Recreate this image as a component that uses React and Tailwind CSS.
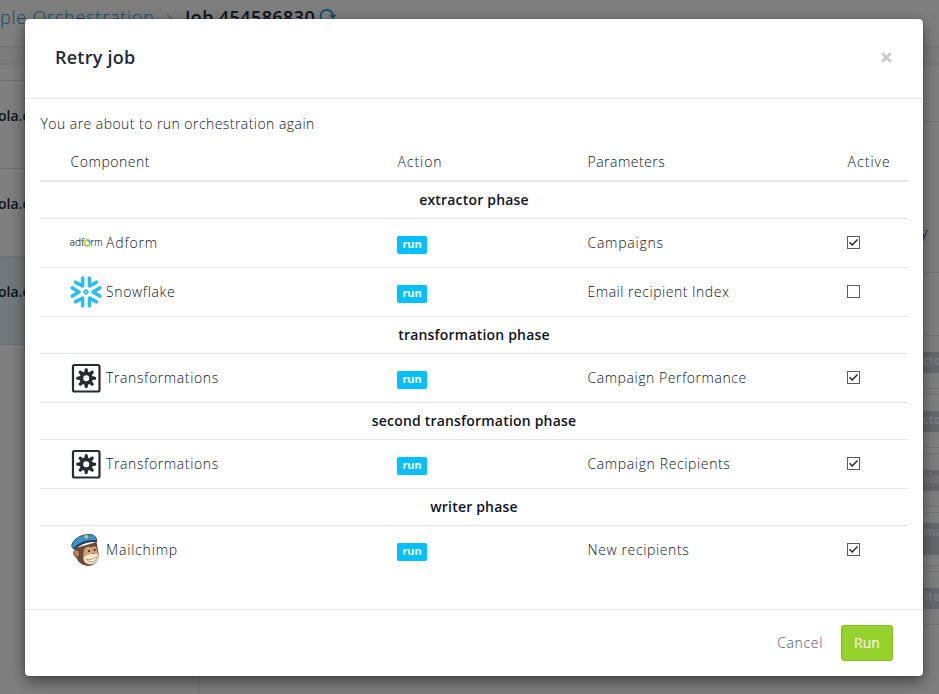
import React from "react";

const AdformLogo = () => (
  <svg width="32" height="32" viewBox="0 0 32 32" className="shrink-0 overflow-visible">
    <text x="-0.5" y="19" fontSize="10" textLength="14.500" lengthAdjust="spacingAndGlyphs" fill="#39393b" stroke="#39393b" strokeWidth=".2" fontFamily="Open Sans, sans-serif">adf</text>
    <text x="20.500" y="19" fontSize="10" textLength="12" lengthAdjust="spacingAndGlyphs" fill="#39393b" stroke="#39393b" strokeWidth=".2" fontFamily="Open Sans, sans-serif">rm</text>
    <circle cx="17" cy="16" r="2.900" fill="none" stroke="#a4cd39" strokeWidth="1.600" />
    <path d="M14.200 17a2.900 2.900 0 0 1 1.500-3.700" fill="none" stroke="#f5d21f" strokeWidth="1.600" />
    <path d="M17.300 13.100a2.900 2.900 0 0 1 2.600 2.900" fill="none" stroke="#35b6c9" strokeWidth="1.600" />
  </svg>
);

const SnowflakeLogo = () => (
  <svg width="32" height="32" viewBox="0 0 32 32" className="shrink-0" fill="none" stroke="#29bdf2" strokeWidth="3.500" strokeLinecap="round" strokeLinejoin="round">
    {[0, 60, 120, 180, 240, 300].map((a) => (
      <path key={a} transform={`rotate(${a} 16 16)`} d="M2.300 11.900 9 16l-6.700 4.100" />
    ))}
    <path d="m16 13.900 2.100 2.100-2.100 2.100-2.100-2.100z" strokeWidth="1.700" />
  </svg>
);

const GearLogo = () => (
  <svg width="32" height="32" viewBox="0 0 32 32" className="shrink-0">
    <rect x="3" y="3" width="26.500" height="26.500" rx="1.500" fill="#fff" stroke="#252c35" strokeWidth="2.200" />
    <g fill="#252c35">
      {[0, 45, 90, 135, 180, 225, 270, 315].map((a) => (
        <path key={a} transform={`rotate(${a} 16.2 16.2)`} d="M13.800 11.400 15 6.300h2.400l1.200 5.100z" />
      ))}
    </g>
    <circle cx="16.200" cy="16.200" r="4.700" fill="none" stroke="#252c35" strokeWidth="3.400" />
  </svg>
);

const MailchimpLogo = () => (
  <svg width="32" height="34" viewBox="0 0 32 34" className="shrink-0">
    <path d="M6 15C5 20 5.500 25 8.500 28.500c3.500 4 9.500 5.500 14 3.500 4-2 6-5 6.500-9L26.500 9z" fill="#6d4a35" />
    <path d="M4 18.500c1.500-2.500 5-2 5.500 1s-1 5-3 4.700S3 21 4 18.500z" fill="#b98563" stroke="#57341f" strokeWidth=".9" />
    <path d="M14.500 16c1.500-2.500 5-3 6.800-1.200 1.500-2.300 4.500-2 5.300.7.500 2 .4 3.500 1.600 5 1.500 4.500-1 9.500-6.500 11-4.200.6-8.200-2-8.500-6-.2-2.500 0-6.500 1.300-9.500z" fill="#d0a27c" />
    <path d="M15 23.500c3-2.500 9.500-4 12.800-2 2.200 2.500 0 7.500-4.800 9-4 1-8 0-9-3-.4-1.500 0-3 1-4z" fill="#f7e5c8" />
    <path d="M16.500 26.300c4 .8 7.500-.2 10.700-2.600-.5 3.500-2.700 5-5.300 5-2.600 0-4.400-.9-5.400-2.400z" fill="#fff" stroke="#8d6548" strokeWidth=".6" />
    <circle cx="19" cy="18" r="1" fill="#2f1d13" />
    <circle cx="24.600" cy="17" r="1" fill="#2f1d13" />
    <path d="M22 20.500h2.500" stroke="#8d6548" strokeWidth="1" />
    <path d="M1.800 12C3.500 5.500 12 1 20.500 1.500c3 .3 5.500 2.200 6 4.500v3C19 7.500 11 10 4.500 16.500c-1.700-1-3-2.500-2.700-4.500z" fill="#3c91cf" stroke="#25435e" strokeWidth=".9" />
    <path d="M3.500 15.200C9 9 18 5.800 26.300 7.300l.5 2C19 8.300 11 10.700 4.700 16.700z" fill="#27425a" />
    <path d="m14.500 2.800 1.500-1 1.800.7.300 2-1.600 1.300-1.700-.9z" fill="#e9c247" />
  </svg>
);

const Checkbox = ({ checked }) => (
  <svg width="13" height="13" viewBox="0 0 13 13">
    <rect x=".5" y=".5" width="12" height="12" fill="#fff" stroke="#5c5c5c" />
    {checked && <path d="M2.600 6.200 5.200 8.900l5.300-5.400" fill="none" stroke="#222" strokeWidth="1.400" />}
  </svg>
);

const Phase = ({ children }) => (
  <div className="flex h-[37px] items-center justify-center border-b border-[#e6e6ed] pb-[2px] font-semibold tracking-[0.19px]">
    <span>{children}</span>
  </div>
);

const Item = ({ logo, name, nameClass, params, paramsClass, checked, last }) => (
  <div className={`grid h-[49px] grid-cols-[327px_190px_260px_1fr] pl-[30px] ${last ? "pb-px" : "border-b border-[#e6e6ed]"}`}>
    <div className="flex items-center gap-1">
      {logo}
      <span className={`-mt-[2px] ${nameClass}`}>{name}</span>
    </div>
    <div className="flex items-center pt-[3px]">
      <span className="flex h-[18px] w-[30px] items-center justify-center rounded-[2px] bg-[#00bfff] pb-px text-[11px] font-bold tracking-[-0.1px] text-white">run</span>
    </div>
    <div className="flex items-center pb-px pl-[0.500px]"><span className={paramsClass}>{params}</span></div>
    <div className="flex items-center pb-px"><Checkbox checked={checked} /></div>
  </div>
);

const User = ({ className }) => (
  <div className={`h-[88px] border-b border-[#dcdcdc] pt-[24px] font-semibold text-[#222938] ${className}`}>
    <span className="-ml-[2px]">ola.com</span>
  </div>
);

const Task = ({ label, height, box, pad }) => (
  <div className={`mb-[5px] border-y border-[#e4e4e4] ${height} ${pad}`}>
    <div className={`bg-[#cfcfdc] text-[12px] leading-[18px] font-bold text-[#f3f3f8] ${box}`}>{label}</div>
  </div>
);

const Backdrop = () => (
  <div className="h-full w-full bg-white text-[14px]">
    <div className="flex h-[48px] items-start border-b-2 border-[#ededed] pt-[5px] text-[18px] leading-[25px]">
      <span className="w-[154px] font-light tracking-[0.780px] whitespace-nowrap text-[#149ad6]">ple Orchestration</span>
      <svg className="mt-[8px] ml-3 mr-[11px]" width="7" height="10" viewBox="0 0 7 10" fill="none" stroke="#ccc" strokeWidth="1.500"><path d="m1 1 4 4-4 4" /></svg>
      <span className="w-[135px] pl-px font-semibold tracking-[0.400px] whitespace-nowrap text-[#20283a]">Job 454586830</span>
      <svg className="mt-[3px]" width="17" height="17" viewBox="0 0 17 17" fill="none" stroke="#149ad6" strokeWidth="1.700"><path d="M4 13A6.200 6.200 0 1 1 14 8M11 7.200l3 2.500 2.500-3" /></svg>
    </div>
    <div className="h-[17px] border-b-2 border-[#ededed] bg-[#f8f8f8]" />
    <div className="flex h-[629px]">
      <div className="w-[199px] border-r border-[#e5e5e5]">
        <div className="h-4 border-b border-[#dcdcdc]" />
        <User className="" />
        <User className="" />
        <User className="bg-[#e0f4f8]" />
      </div>
      <div className="flex-1" />
      <div className="w-[18px]">
        <div className="h-[57px] border-b border-[#e4e4e4]" />
        <div className="h-[151px] border-b border-[#e4e4e4] pt-[100px] font-light text-[#20283a]">y</div>
        <div className="h-[62px]" />
        <Task label="acto" height="h-[54px]" pad="pt-[16px]" box="h-[21px] -ml-[6px]" />
        <Task label="acto" height="h-[54px]" pad="pt-[16px]" box="h-[21px] -ml-[6px]" />
        <Task label="atio" height="h-[54px]" pad="pt-[16px]" box="h-[21px] -ml-[5px]" />
        <Task label="rma" height="h-[54px]" pad="pt-[10px]" box="h-[32px] -ml-[2px] tracking-[-0.6px]" />
        <Task label="rite" height="h-[54px]" pad="pt-[16px]" box="h-[21px] -ml-[2px]" />
      </div>
    </div>
  </div>
);

export default function App() {
  return (
    <div className="relative h-[694px] w-[939px] overflow-hidden font-['Open_Sans',sans-serif]">
      <Backdrop />
      <div className="absolute inset-0 bg-black/50" />
      <div className="absolute top-[19px] left-[25px] flex h-[657px] w-[898px] flex-col rounded-[4px] bg-white text-[14px] font-light text-[#0f1524] shadow-[0_5px_15px_rgba(0,0,0,0.5),0_0_1px_rgba(0,0,0,0.7)]">
        <div className="flex h-[80px] items-center justify-between border-b border-[#e6e6ed] pr-[31px] pb-[2px] pl-[30px] text-[#222938]">
          <h1 className="text-[18px] font-semibold tracking-[0.250px]">Retry job</h1>
          <svg width="11" height="11" viewBox="0 0 11 11" stroke="#ccc" strokeWidth="3"><path d="m1.200 1.200 8.600 8.600M9.800 1.200 1.200 9.800" /></svg>
        </div>
        <div className="flex h-[510px] flex-col px-[15px] pt-[15px]">
          <p className="pl-[0.500px] leading-5 tracking-[0.450px]">You are about to run orchestration again</p>
          <div className="mt-2 grid h-[40px] grid-cols-[327px_190px_260px_1fr] items-center border-b-2 border-[#e6e6ed] pl-[30.500px]">
            <span className="tracking-[0.540px]">Component</span>
            <span className="tracking-[0.950px]">Action</span>
            <span className="tracking-[0.480px]">Parameters</span>
            <span className="tracking-[1.050px]">Active</span>
          </div>
          <Phase>extractor phase</Phase>
          <Item logo={<AdformLogo />} name="Adform" nameClass="tracking-[0.850px]" params="Campaigns" paramsClass="tracking-[0.750px]" checked />
          <Item logo={<SnowflakeLogo />} name="Snowflake" nameClass="tracking-[0.650px]" params="Email recipient Index" paramsClass="tracking-[0.520px]" />
          <Phase>transformation phase</Phase>
          <Item logo={<GearLogo />} name="Transformations" nameClass="tracking-[0.620px]" params="Campaign Performance" paramsClass="tracking-[0.550px]" checked />
          <Phase>second transformation phase</Phase>
          <Item logo={<GearLogo />} name="Transformations" nameClass="tracking-[0.620px]" params="Campaign Recipients" paramsClass="tracking-[0.630px]" checked />
          <Phase>writer phase</Phase>
          <Item logo={<MailchimpLogo />} name="Mailchimp" nameClass="tracking-[0.820px]" params="New recipients" paramsClass="tracking-[0.620px]" checked last />
        </div>
        <div className="flex h-[67px] items-center justify-end gap-[18px] border-t border-[#e5e5e5] pr-[30px]">
          <button className="pb-px tracking-[0.650px] text-[#4c5674]">Cancel</button>
          <button className="h-[36px] w-[52px] rounded-[3px] border border-[#86bc25] bg-[#96d22d] pb-px font-normal text-white">Run</button>
        </div>
      </div>
    </div>
  );
}
